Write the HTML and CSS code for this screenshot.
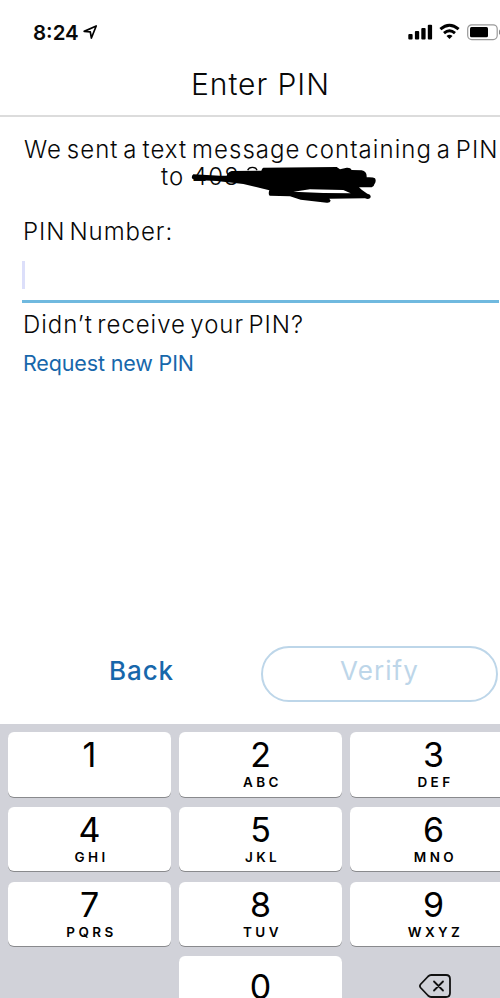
FILE: index.html
```html
<!DOCTYPE html>
<html lang="en">
<head>
<meta charset="utf-8">
<meta name="viewport" content="width=device-width">
<title>Enter PIN</title>
<link rel="stylesheet" href="styles.css">
</head>
<body>
<div class="screen">
  <header class="status">
    <span class="time">8:24</span>
    <svg class="location" width="16" height="16" viewBox="0 0 16 16"><path d="M1.2 7.4 13.2 2 8.4 14 7.3 7.9Z" fill="none" stroke="#000" stroke-width="1.7" stroke-linejoin="round"/></svg>
    <svg class="indicators" width="96" height="20" viewBox="0 0 96 20">
      <rect x="0.3" y="11" width="4.3" height="5.5" rx="1"/><rect x="6.9" y="8" width="4.3" height="8.5" rx="1"/><rect x="13.3" y="5" width="4.3" height="11.5" rx="1"/><rect x="19.8" y="1.7" width="4.3" height="14.8" rx="1"/>
      <g fill="none" stroke="#000" stroke-width="2.9"><path d="M32.4 6.2Q41.5-1.9 50.6 6.2"/><path d="M36 10.1Q41.5 5.2 47 10.1"/></g>
      <path d="M38.5 12.9Q41.5 10.8 44.5 12.9L41.5 16Z"/>
      <rect x="59.7" y="1.8" width="29.5" height="14.8" rx="4" fill="none" stroke="#999" stroke-width="1.2"/>
      <rect x="62" y="4" width="18" height="10.3" rx="1.5"/>
      <path d="M91 6.5Q94 9 91 12Z" fill="#888"/>
    </svg>
  </header>
  <h1 class="title">Enter PIN</h1>
  <main class="content">
    <p class="message"><span class="line first">We sent a text message containing a PIN</span><span class="line second">to <span class="number">408
      <svg class="scribble" width="210" height="60" viewBox="0 0 630 180">
        <path fill-rule="evenodd" d="M40 58Q34 62 36 70 38 74 45 75L110 78 190 87 268 106Q264 117 269 122L330 124 362 134 440 143Q450 144 452 137L448 131 555 130Q568 135 572 127 573 118 562 116L545 104 537 97 575 97Q582 96 583 88 590 78 585 70 580 66 560 67 561 48 545 46L515 45Q512 37 500 38L480 43 470 36 250 38Q246 40 244 47L155 48Q143 52 140 62L120 62ZM340 110 390 103 490 105 512 115 430 114Z"/>
        <path d="M203 46Q206 37 217 37T231 46" fill="none" stroke="#000" stroke-width="4"/>
      </svg></span></span></p>
    <label class="label" for="pin">PIN Number:</label>
    <div class="field" id="pin"><span class="caret"></span></div>
    <p class="question">Didn’t receive your PIN?</p>
    <a class="request">Request new PIN</a>
  </main>
  <div class="actions"><span class="back">Back</span><span class="verify">Verify</span></div>
  <div class="keypad">
    <div class="key"><b>1</b></div>
    <div class="key"><b>2</b><i>ABC</i></div>
    <div class="key"><b>3</b><i>DEF</i></div>
    <div class="key"><b>4</b><i>GHI</i></div>
    <div class="key"><b>5</b><i>JKL</i></div>
    <div class="key"><b>6</b><i>MNO</i></div>
    <div class="key"><b>7</b><i>PQRS</i></div>
    <div class="key"><b>8</b><i>TUV</i></div>
    <div class="key"><b>9</b><i>WXYZ</i></div>
    <div></div>
    <div class="key zero"><b>0</b></div>
    <div class="delete"><svg width="34" height="26" viewBox="0 0 34 26" fill="none" stroke="#111" stroke-width="1.8" stroke-linecap="round" stroke-linejoin="round"><path d="M13.2 2H28Q32 2 32 6V20Q32 24 28 24H13.2Q11.5 24 10 22.5L2.4 14.5Q1.2 13 2.4 11.5L10 3.5Q11.5 2 13.2 2ZM16 8.5 25 17.5M25 8.5 16 17.5"/></svg></div>
  </div>
</div>
</body>
</html>
```
FILE: styles.css
```css
* { box-sizing: border-box; }
html, body { margin: 0; width: 500px; height: 998px; overflow: hidden; background: #fff; }
body { font-family: Inter, "Liberation Sans", sans-serif; color: #080808; }
h1, p { margin: 0; font-weight: 300; }
.screen { width: 525px; height: 998px; overflow: hidden; display: flex; flex-direction: column; }
.status { height: 54px; padding: 22px 0 0 33px; display: flex; align-items: flex-start; flex: none; }
.time { font-size: 20.5px; line-height: 21px; font-weight: 600; width: 45px; margin-right: 5px; white-space: nowrap; }
.location { margin-top: 2px; }
.indicators { margin: 1px 0 0 309px; flex: none; }
.title { height: 63px; flex: none; border-bottom: 2px solid #dcdcdc; padding-right: 4px; text-align: center; font-size: 30px; line-height: 60px; letter-spacing: .95px; }
.content { height: 523px; flex: none; padding: 19px 22px 0 23px; display: flex; flex-direction: column; align-items: flex-start; }
.message { font-size: 24px; line-height: 27px; width: 475px; letter-spacing: 1.05px; word-spacing: -3px; }
.line { display: block; white-space: nowrap; height: 27px; }
.first { padding-left: 1px; }
.second { padding-left: 138px; }
.number { position: relative; display: inline-block; margin-left: 3px; }
.scribble { position: absolute; left: -12px; top: -8px; }
.label { font-size: 24px; line-height: 28px; font-weight: 300; margin-top: 28px; letter-spacing: .95px; word-spacing: -3.7px; }
.field { width: 477px; margin-left: -1px; height: 57px; border-bottom: 3px solid #70b9df; padding: 15px 0 0 0; }
.caret { display: block; width: 3px; height: 28px; background: #dcdffa; }
.question { font-size: 24px; line-height: 28px; margin-top: 8px; letter-spacing: .95px; word-spacing: -3.2px; }
.request { font-size: 21.5px; line-height: 28px; margin-top: 10px; color: #1767ab; letter-spacing: -.15px; }
.actions { height: 84px; flex: none; padding: 6px 23px 0 22px; display: grid; grid-template-columns: 239px 237px; align-items: start; text-align: center; }
.back, .verify { height: 56px; line-height: 50px; font-size: 26px; letter-spacing: .9px; }
.back { color: #1767ab; font-weight: 500; }
.verify { border: 2px solid #bdd6e9; border-radius: 28px; color: #bdd6e9; line-height: 46px; letter-spacing: 1.1px; }
.keypad { height: 274px; flex: none; background: #d1d2d9; padding: 8px 8px 0; display: grid; grid-template-columns: 163px 163px 167px; grid-auto-rows: 64.5px; gap: 10.3px 8px; }
.key { background: #fff; border-radius: 6px; box-shadow: 0 1px 0 #898a8d; text-align: center; color: #000; padding-top: 4px; }
.key b { display: block; font-size: 34px; line-height: 37px; font-weight: 400; }
.key i { display: block; font: 600 13.5px/18px Inter, sans-serif; letter-spacing: 3.4px; margin-right: -4px; }
.zero { padding-top: 12px; }
.delete { display: flex; justify-content: center; padding-top: 17px; padding-left: 3px; }
```
